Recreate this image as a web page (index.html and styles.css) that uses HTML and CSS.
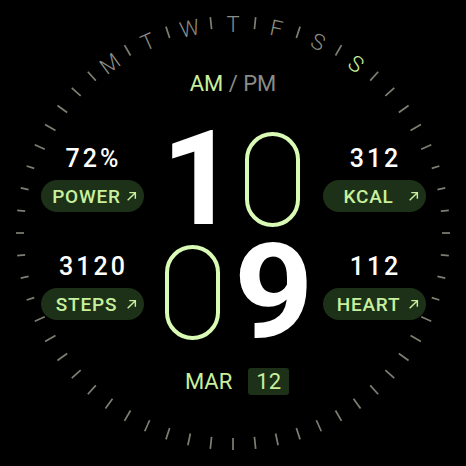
FILE: index.html
```html
<!DOCTYPE html>
<html lang="en">
<head>
<meta charset="utf-8">
<title>Watch face</title>
<link rel="stylesheet" href="styles.css">
</head>
<body>
<div class="face">
  <svg class="dial" width="466" height="466" viewBox="0 0 466 466">
    <g id="ticks" class="ticks"></g>
    <g class="days">
      <text x="233" y="24" transform="rotate(-36 233 233)">M</text>
      <text x="233" y="24" transform="rotate(-24 233 233)">T</text>
      <text x="233" y="24" transform="rotate(-12 233 233)">W</text>
      <text x="233" y="24">T</text>
      <text x="233" y="24" transform="rotate(12 233 233)">F</text>
      <text x="233" y="24" transform="rotate(24 233 233)">S</text>
      <text x="233" y="24" transform="rotate(36 233 233)" class="today">S</text>
    </g>
  </svg>

  <div class="ampm"><span class="on">AM</span> / PM</div>

  <div class="main">
    <div class="stats">
      <div class="stat">
        <div class="num">72%</div>
        <div class="pill"><span class="label">POWER</span><svg class="arrow" viewBox="0 0 10 10"><path d="M1.5 8.5 L8.5 1.5 M3 1.5 H8.5 V7"/></svg></div>
      </div>
      <div class="stat">
        <div class="num">3120</div>
        <div class="pill"><span class="label">STEPS</span><svg class="arrow" viewBox="0 0 10 10"><path d="M1.5 8.5 L8.5 1.5 M3 1.5 H8.5 V7"/></svg></div>
      </div>
    </div>

    <div class="digits">
      <span class="digit d1">1</span>
      <span class="zero z1"><span class="zero-text">0</span></span>
      <span class="zero z2"><span class="zero-text">0</span></span>
      <span class="digit d9">9</span>
    </div>

    <div class="stats">
      <div class="stat">
        <div class="num">312</div>
        <div class="pill"><span class="label">KCAL</span><svg class="arrow" viewBox="0 0 10 10"><path d="M1.5 8.5 L8.5 1.5 M3 1.5 H8.5 V7"/></svg></div>
      </div>
      <div class="stat">
        <div class="num">112</div>
        <div class="pill"><span class="label">HEART</span><svg class="arrow" viewBox="0 0 10 10"><path d="M1.5 8.5 L8.5 1.5 M3 1.5 H8.5 V7"/></svg></div>
      </div>
    </div>
  </div>

  <div class="date"><span class="month">MAR</span><span class="day">12</span></div>
</div>
<script src="dial.js"></script>
</body>
</html>
```

FILE: styles.css
```css
html, body {
  margin: 0;
  padding: 0;
  background: #000;
}

.face {
  position: relative;
  width: 466px;
  height: 466px;
  background: #000;
  display: flex;
  flex-direction: column;
  align-items: center;
  font-family: Roboto, "Noto Sans", sans-serif;
  color: #fff;
  overflow: hidden;
}

.dial {
  position: absolute;
  left: 0;
  top: 0;
}

.ticks line {
  stroke: #7c8073;
  stroke-width: 1.7;
}

.days text {
  font-family: Roboto, sans-serif;
  font-weight: 300;
  font-size: 22px;
  fill: #8a8d85;
  text-anchor: middle;
  dominant-baseline: central;
}

.days text.today {
  fill: #c8f09c;
}

.ampm {
  margin-top: 70px;
  font-size: 22px;
  line-height: 28px;
  color: #8a8c87;
}

.ampm .on {
  color: #c8f09c;
}

.main {
  margin-top: 34px;
  display: grid;
  grid-template-columns: 103px 145px 103px;
  column-gap: 17px;
  align-items: start;
}

.stats {
  margin-top: 12px;
  display: flex;
  flex-direction: column;
  gap: 40px;
}

.stat {
  display: flex;
  flex-direction: column;
  align-items: center;
  gap: 6px;
}

.num {
  font-size: 25px;
  line-height: 30px;
  font-weight: 500;
  letter-spacing: 3px;
  margin-right: -3px;
  color: #fff;
}

.pill {
  box-sizing: border-box;
  width: 103px;
  height: 32px;
  border-radius: 16px;
  background: #1c3118;
  display: flex;
  align-items: center;
  padding: 0 7px 0 7px;
}

.label {
  flex: 1;
  text-align: center;
  font-size: 19px;
  font-weight: 500;
  letter-spacing: 0.8px;
  color: #c8f09c;
}

.arrow {
  width: 11px;
  height: 11px;
  fill: none;
  stroke: #c8f09c;
  stroke-width: 1.3;
}

.digits {
  display: grid;
  grid-template-columns: 72px 73px;
  grid-auto-rows: 95px;
  row-gap: 18px;
}

.digit {
  font-size: 131px;
  line-height: 95px;
  font-weight: 700;
  color: #fff;
}

.d1 {
  margin-left: 1px;
}

.d9 {
  margin-left: 1px;
  transform: scaleX(1.06);
  transform-origin: left center;
}

.zero {
  box-sizing: border-box;
  width: 55px;
  height: 95px;
  border: 4px solid #d9fbb6;
  border-radius: 28px;
  display: flex;
  align-items: center;
  justify-content: center;
}

.zero-text {
  color: transparent;
  font-size: 8px;
  line-height: 8px;
}

.z1 {
  margin-left: 12px;
}

.z2 {
  margin-left: 4px;
}

.date {
  margin-top: 28px;
  margin-left: 8px;
  display: flex;
  align-items: center;
  gap: 16px;
  font-size: 22px;
  line-height: 27px;
  color: #c8f09c;
}

.day {
  box-sizing: border-box;
  height: 27px;
  padding: 0 8px;
  border-radius: 3px;
  background: #1c3118;
}
```

FILE: dial.js
```js
(function () {
  var g = document.getElementById('ticks');
  var ns = 'http://www.w3.org/2000/svg';
  var skip = { '-36': 1, '-24': 1, '-12': 1, '0': 1, '12': 1, '24': 1, '36': 1 };
  for (var i = 0; i < 60; i++) {
    var a = i * 6;
    var s = a > 180 ? a - 360 : a;
    if (skip[String(s)]) continue;
    var fromH = Math.abs(90 - Math.abs(s));
    var len = fromH <= 18 ? 8 : (fromH <= 24 ? 11 : 12);
    var l = document.createElementNS(ns, 'line');
    l.setAttribute('x1', 233);
    l.setAttribute('y1', 16);
    l.setAttribute('x2', 233);
    l.setAttribute('y2', 16 + len);
    l.setAttribute('transform', 'rotate(' + a + ' 233 233)');
    g.appendChild(l);
  }
})();
```
